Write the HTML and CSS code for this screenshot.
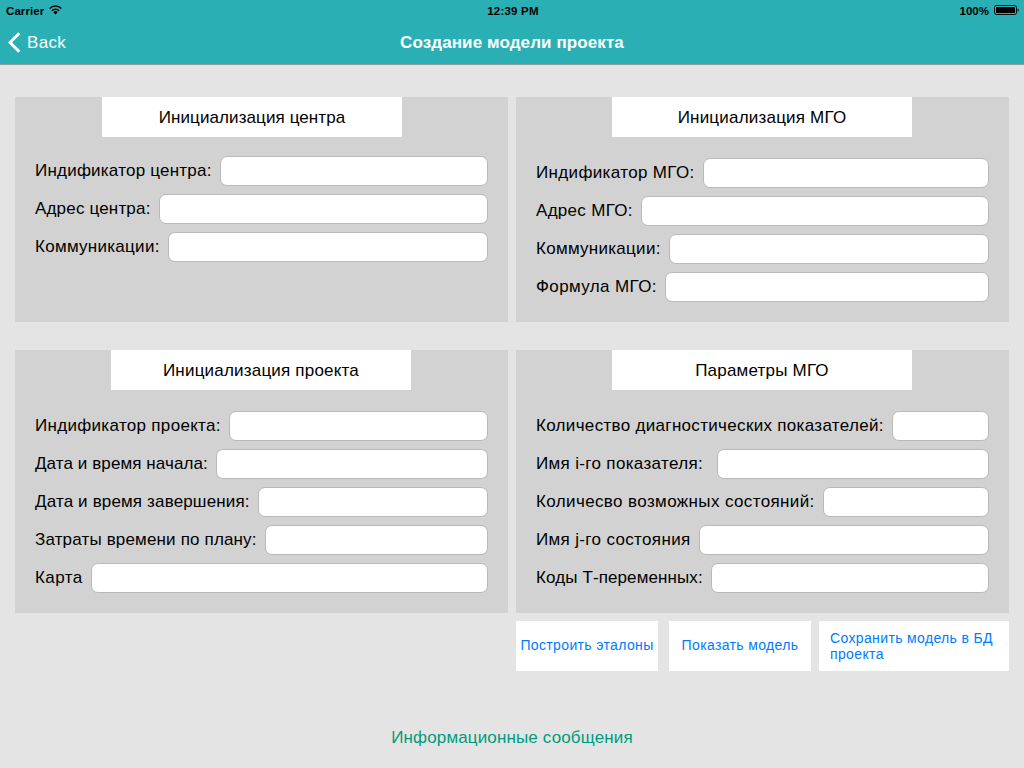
FILE: index.html
```html
<!DOCTYPE html>
<html lang="ru">
<head>
<meta charset="utf-8">
<title>Создание модели проекта</title>
<link rel="stylesheet" href="styles.css">
</head>
<body>
<header class="top">
  <div class="status">
    <div class="carrier"><span>Carrier</span>
      <svg class="wifi" width="13" height="10" viewBox="0 0 13 10"><path d="M.7 3.5a8.2 8.2 0 0 1 11.6 0M2.8 5.7a5.2 5.2 0 0 1 7.4 0" fill="none" stroke="#000" stroke-width="1.5"/><path d="M6.5 9.4 4.3 7.2a3.1 3.1 0 0 1 4.4 0z"/></svg>
    </div>
    <div class="clock">12:39 PM</div>
    <div class="power"><span>100%</span>
      <svg class="battery" width="26" height="10" viewBox="0 0 26 10"><rect x=".5" y=".5" width="22" height="9" rx="1.8" fill="none" stroke="#000" stroke-width=".9"/><rect x="2" y="2" width="19" height="6" rx=".5"/><path d="M23.7 3.2c1.3.5 1.3 3.1 0 3.6z"/></svg>
    </div>
  </div>
  <nav class="nav">
    <a class="back"><svg width="13" height="21" viewBox="0 0 13 21"><path d="M11.3 1.2 2 10.5l9.3 9.3" fill="none" stroke="#fff" stroke-width="3"/></svg><span>Back</span></a>
    <h1 class="title">Создание модели проекта</h1>
  </nav>
</header>
<main class="grid">
  <section class="panel center"><h2>Инициализация центра</h2>
    <div class="row"><label class="center-id">Индификатор центра:</label><input></div>
    <div class="row"><label class="center-address">Адрес центра:</label><input></div>
    <div class="row"><label class="links">Коммуникации:</label><input></div>
  </section>
  <section class="panel mgo"><h2>Инициализация МГО</h2>
    <div class="row"><label class="mgo-id">Индификатор МГО:</label><input></div>
    <div class="row"><label class="mgo-address">Адрес МГО:</label><input></div>
    <div class="row"><label class="links">Коммуникации:</label><input></div>
    <div class="row"><label class="mgo-formula">Формула МГО:</label><input></div>
  </section>
  <section class="panel project"><h2>Инициализация проекта</h2>
    <div class="row"><label class="project-id">Индификатор проекта:</label><input></div>
    <div class="row"><label class="start-date">Дата и время начала:</label><input></div>
    <div class="row"><label class="end-date">Дата и время завершения:</label><input></div>
    <div class="row"><label class="time-cost">Затраты времени по плану:</label><input></div>
    <div class="row"><label class="map">Карта</label><input></div>
  </section>
  <section class="panel params"><h2>Параметры МГО</h2>
    <div class="row"><label class="indicator-count">Количество диагностических показателей:</label><input></div>
    <div class="row"><label class="indicator-name">Имя i-го показателя:</label><input></div>
    <div class="row"><label class="state-count">Количесво возможных состояний:</label><input></div>
    <div class="row"><label class="state-name">Имя j-го состояния</label><input></div>
    <div class="row"><label class="codes">Коды Т-переменных:</label><input></div>
  </section>
</main>
<div class="actions">
  <button class="build">Построить эталоны</button>
  <button class="show">Показать модель</button>
  <button class="save">Сохранить модель в БД<br>проекта</button>
</div>
<footer class="messages">Информационные сообщения</footer>
</body>
</html>
```
FILE: styles.css
```css
* { box-sizing: border-box; }
body { margin: 0; width: 1024px; height: 768px; overflow: hidden; background: #e4e4e4; font-family: "Liberation Sans", Arial, sans-serif; font-size: 17px; color: #000; }

.top { height: 65px; background: #2ab0b4; border-bottom: 1px solid #8e9b9c; }
.status { display: grid; grid-template-columns: 1fr auto 1fr; height: 20px; padding: 0 4px 0 6px; font-size: 11.5px; font-weight: bold; line-height: 22px; }
.carrier, .power { display: flex; gap: 5px; }
.carrier { letter-spacing: .08px; }
.clock { letter-spacing: .22px; }
.power { justify-content: flex-end; }
.wifi, .battery { margin-top: 5px; }
.nav { display: grid; grid-template-columns: 1fr auto 1fr; height: 44px; padding: 0 8px; line-height: 45px; }
.back { display: flex; gap: 6px; color: #fff; letter-spacing: .3px; }
.back svg { margin-top: 12px; }
.title { margin: 0; font-size: 17px; color: #fff; letter-spacing: .1px; }

.grid { display: grid; grid-template-columns: 493px 493px; grid-template-rows: 225px 263px; gap: 28px 8px; padding: 32px 15px 0; }
.panel { display: flex; flex-direction: column; gap: 8px; padding: 0 20px; background: #d2d2d2; }
.panel h2 { flex: none; width: 300px; height: 40px; margin: 0 0 13px 76px; background: #fff; text-align: center; font-size: 17px; font-weight: normal; line-height: 41px; letter-spacing: .2px; }
.center h2 { margin: 0 0 11px 67px; letter-spacing: .1px; }
.row { display: flex; gap: 8px; height: 30px; line-height: 30px; }
.row label { flex: none; white-space: nowrap; }
.row input { flex: 1; min-width: 0; padding: 0 7px; border: 1px solid #b9b9b9; border-radius: 7px; background: #fff; outline: 0; }

.center-id { width: 177px; letter-spacing: .22px; }
.center-address { width: 116px; letter-spacing: .18px; }
.links { width: 125px; letter-spacing: .28px; }
.mgo-id { width: 159px; letter-spacing: .35px; }
.mgo-address { width: 97px; letter-spacing: .3px; }
.mgo-formula { width: 121px; letter-spacing: .38px; }
.project-id { width: 186px; letter-spacing: .31px; }
.start-date { width: 173px; letter-spacing: .09px; }
.end-date { width: 215px; letter-spacing: .15px; }
.time-cost { width: 222px; letter-spacing: .16px; }
.map { width: 48px; letter-spacing: .45px; }
.indicator-count { width: 348px; letter-spacing: .32px; }
.indicator-name { width: 173px; letter-spacing: .34px; }
.state-count { width: 279px; letter-spacing: .38px; }
.state-name { width: 155px; letter-spacing: .35px; }
.codes { width: 167px; letter-spacing: .11px; }

.actions { display: grid; grid-template-columns: 142px 142px 190px; column-gap: 11px; height: 58px; padding: 8px 0 0 516px; }
.actions button { height: 50px; padding: 0 0 2px; border: 0; background: #fff; color: #007aff; font: 14px/16px "Liberation Sans", Arial, sans-serif; letter-spacing: .36px; white-space: nowrap; }
.actions .save { margin-left: -3px; width: 190px; padding: 0 0 0 11px; text-align: left; }
.messages { margin-top: 56px; text-align: center; line-height: 22px; letter-spacing: .14px; color: #009b7d; }
```
